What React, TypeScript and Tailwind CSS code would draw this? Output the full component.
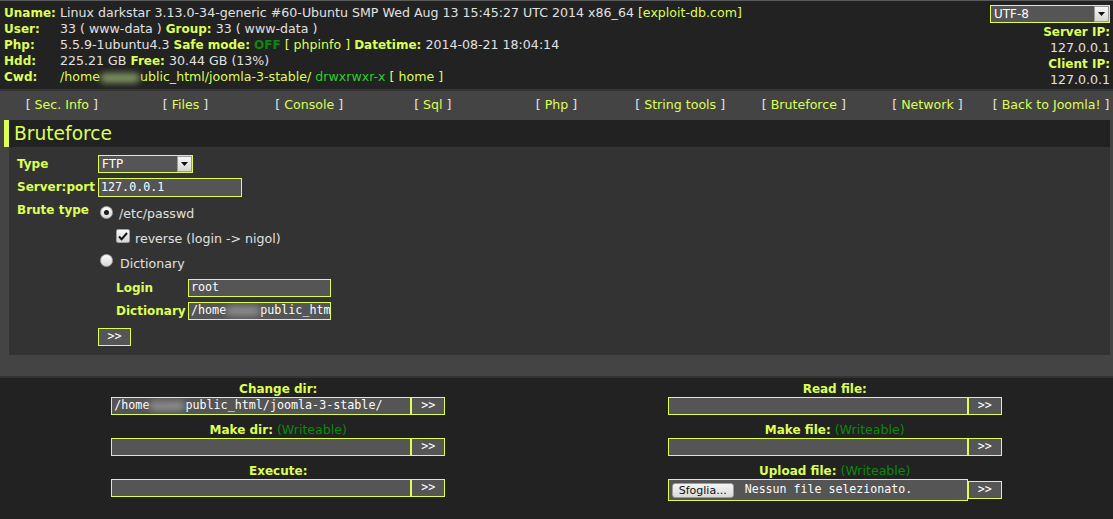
import React from 'react';

const sans = "font-['DejaVu_Sans',Verdana,sans-serif]";
const mono = "font-['DejaVu_Sans_Mono',monospace]";

function B({ children }: { children: React.ReactNode }) {
  return <span className="font-bold text-[12px] text-[#ddff55]">{children}</span>;
}

function Smudge({ w, tone }: { w: string; tone: string }) {
  return <span className={`inline-block shrink-0 align-middle h-[10px] rounded-full blur-[3px] ${w} ${tone}`} />;
}

function FakeSelect({ value, w }: { value: string; w: string }) {
  return (
    <div className={`${w} h-[18px] border border-[#ddff55] bg-[#555] flex items-center justify-between text-white`}>
      <span className={`pl-[3px] leading-none text-[12px] ${sans}`}>{value}</span>
      <span className="w-[15px] h-[16px] bg-gradient-to-b from-[#f6f6f6] to-[#d6d6d6] border border-[#9a9a9a] flex items-center justify-center">
        <svg width="7" height="4" viewBox="0 0 7 4">
          <path d="M0 0h7L3.5 4z" fill="#111" />
        </svg>
      </span>
    </div>
  );
}

function Radio({ checked }: { checked?: boolean }) {
  return (
    <span className="w-[13px] h-[13px] shrink-0 rounded-full border border-[#a8a8a8] bg-gradient-to-b from-[#fbfbfb] to-[#d8d8d8] flex items-center justify-center">
      {checked && <span className="w-[5px] h-[5px] rounded-full bg-[#1a1a1a]" />}
    </span>
  );
}

function Checkbox() {
  return (
    <span className="w-[14px] h-[14px] shrink-0 rounded-[2px] border border-[#a0a0a0] bg-gradient-to-b from-[#f8f8f8] to-[#d4d4d4] flex items-center justify-center">
      <svg width="10" height="9" viewBox="0 0 10 9">
        <path d="M1 4.5l2.6 2.8L9 1" stroke="#111" strokeWidth="2" fill="none" />
      </svg>
    </span>
  );
}

function TextBox({ w, h = 'h-[18px]', children }: { w: string; h?: string; children?: React.ReactNode }) {
  return (
    <div className={`${w} ${h} border border-[#ddff55] bg-[#555] text-white ${mono} text-[11.7px] leading-none flex items-center pl-[2px] overflow-hidden whitespace-nowrap`}>
      {children}
    </div>
  );
}

function Go({ w = 'w-[34px]' }: { w?: string }) {
  return (
    <div className={`${w} h-[18px] border border-[#ddff55] bg-[#555] text-white ${mono} text-[11.7px] flex items-center justify-center`}>
      &gt;&gt;
    </div>
  );
}

const menu = ['Sec. Info', 'Files', 'Console', 'Sql', 'Php', 'String tools', 'Bruteforce', 'Network', 'Back to Joomla!'];

function Tool({ label, note, children }: { label: string; note?: boolean; children?: React.ReactNode }) {
  return (
    <div className="flex flex-col items-center pt-[3px] pb-[4px]">
      <div className="leading-[16px] whitespace-nowrap">
        <B>{label}</B>
        {note && <span className="text-[#0a8a0a]"> (Writeable)</span>}
      </div>
      {children}
    </div>
  );
}

export default function App() {
  return (
    <div className={`min-h-screen bg-[#444] text-[#e1e1e1] text-[12.6px] ${sans}`}>
      {/* info header */}
      <div className="h-[89px] bg-[#222] border-t border-[#5c5c5c] flex pl-[4px] pr-[3px]">
        <div className="w-[56px] pt-[4px] leading-[16px] shrink-0">
          <div><B>Uname:</B></div>
          <div><B>User:</B></div>
          <div><B>Php:</B></div>
          <div><B>Hdd:</B></div>
          <div><B>Cwd:</B></div>
        </div>
        <div className="flex-1 pt-[4px] leading-[16px] whitespace-nowrap">
          <div>
            Linux darkstar 3.13.0-34-generic #60-Ubuntu SMP Wed Aug 13 15:45:27 UTC 2014 x86_64{' '}
            <span className="text-[#ddff55]">[exploit-db.com]</span>
          </div>
          <div>
            33 ( www-data ) <B>Group:</B> 33 ( www-data )
          </div>
          <div>
            5.5.9-1ubuntu4.3 <B>Safe mode:</B> <span className="font-bold text-[12px] text-[#0a8a0a]">OFF</span>{' '}
            <span className="text-[#ddff55]">[ phpinfo ]</span> <B>Datetime:</B> 2014-08-21 18:04:14
          </div>
          <div>
            225.21 GB <B>Free:</B> 30.44 GB (13%)
          </div>
          <div>
            <span className="text-[#ddff55]">/home</span>
            <Smudge w="w-[40px]" tone="bg-[#7d9060]" />
            <span className="text-[#ddff55]">ublic_html/joomla-3-stable/</span>{' '}
            <span className="text-[#2bcf2b]">drwxrwxr-x</span>{' '}
            <span className="text-[#ddff55]">[ home ]</span>
          </div>
        </div>
        <div className="pt-[4px] flex flex-col items-end leading-[16px] text-right whitespace-nowrap">
          <FakeSelect value="UTF-8" w="w-[120px]" />
          <div className="mt-[1px]"><B>Server IP:</B></div>
          <div>127.0.0.1</div>
          <div><B>Client IP:</B></div>
          <div>127.0.0.1</div>
        </div>
      </div>

      {/* menu */}
      <div className="h-[31px] border-t-2 border-[#333] grid grid-cols-9 text-center pt-[6px] leading-[16px] whitespace-nowrap">
        {menu.map((m) => (
          <div key={m}>
            [ <span className="text-[#ddff55]">{m}</span> ]
          </div>
        ))}
      </div>

      {/* bruteforce section */}
      <div className="ml-[4px] mr-[3px] mb-[21px]">
        <h1 className="h-[27px] border-l-[5px] border-[#ddff55] bg-[#222] pl-[5px] text-[18.67px] leading-[28px] text-[#ddff55]">
          Bruteforce
        </h1>
        <div className="ml-[5px] bg-[#333] pt-[8px] pb-[9px] pl-[8px]">
          <div className="flex items-center h-[18px]">
            <div className="w-[81px]"><B>Type</B></div>
            <FakeSelect value="FTP" w="w-[95px]" />
          </div>
          <div className="flex items-center h-[19px] mt-[5px]">
            <div className="w-[81px]"><B>Server:port</B></div>
            <TextBox w="w-[144px]" h="h-[19px]">127.0.0.1</TextBox>
          </div>
          <div className="flex items-start h-[22px] mt-[4px]">
            <div className="w-[81px] leading-[18px]"><B>Brute type</B></div>
            <div className="flex items-start mt-[5px] ml-[2px]">
              <Radio checked />
              <span className="ml-[6px] leading-[16px]">/etc/passwd</span>
            </div>
          </div>
          <div className="flex items-start h-[18px] mt-[6px] ml-[99px]">
            <Checkbox />
            <span className="ml-[5px] leading-[16px] pt-[2px]">reverse (login -&gt; nigol)</span>
          </div>
          <div className="flex items-start h-[18px] mt-[7px] ml-[83px]">
            <Radio />
            <span className="ml-[7px] leading-[16px] pt-[2px]">Dictionary</span>
          </div>
          <div className="flex items-center h-[18px] mt-[7px] ml-[99px]">
            <div className="w-[72px]"><B>Login</B></div>
            <TextBox w="w-[143px]">root</TextBox>
          </div>
          <div className="flex items-center h-[18px] mt-[5px] ml-[99px]">
            <div className="w-[72px]"><B>Dictionary</B></div>
            <TextBox w="w-[143px]">
              /home
              <Smudge w="w-[34px]" tone="bg-[#8a8a8a]" />
              public_htm
            </TextBox>
          </div>
          <div className="mt-[8px] ml-[81px]">
            <Go w="w-[33px]" />
          </div>
        </div>
      </div>

      {/* tools */}
      <div className="border-t-2 border-[#333] bg-[#222] grid grid-cols-2 pb-[17px]">
        <Tool label="Change dir:">
          <div className="flex">
            <TextBox w="w-[300px]">
              /home
              <Smudge w="w-[36px]" tone="bg-[#8a8a8a]" />
              public_html/joomla-3-stable/
            </TextBox>
            <Go />
          </div>
        </Tool>
        <Tool label="Read file:">
          <div className="flex">
            <TextBox w="w-[300px]" />
            <Go />
          </div>
        </Tool>
        <Tool label="Make dir:" note>
          <div className="flex">
            <TextBox w="w-[300px]" />
            <Go />
          </div>
        </Tool>
        <Tool label="Make file:" note>
          <div className="flex">
            <TextBox w="w-[300px]" />
            <Go />
          </div>
        </Tool>
        <Tool label="Execute:">
          <div className="flex">
            <TextBox w="w-[300px]" />
            <Go />
          </div>
        </Tool>
        <Tool label="Upload file:" note>
          <div className="flex items-center">
            <TextBox w="w-[300px]" h="h-[22px]">
              <span className={`ml-[1px] h-[15px] px-[6px] rounded-[3px] border border-[#9c9c9c] bg-gradient-to-b from-[#f4f4f4] to-[#dadada] text-[#111] text-[11px] ${sans} flex items-center`}>
                Sfoglia...
              </span>
              <span className="ml-[11px] text-[11.6px]">Nessun file selezionato.</span>
            </TextBox>
            <Go />
          </div>
        </Tool>
      </div>
    </div>
  );
}
